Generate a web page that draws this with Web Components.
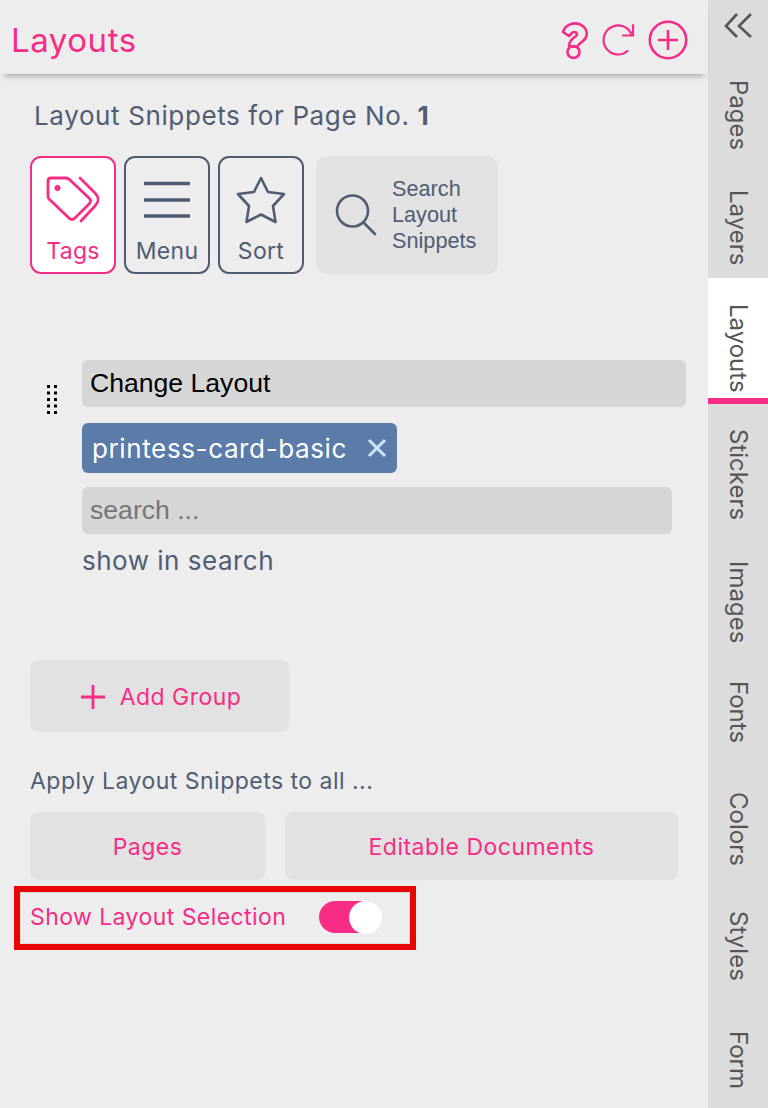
<!DOCTYPE html>
<html>
<head>
<meta charset="utf-8">
<title>Layouts</title>
<style>
    html, body { margin: 0; padding: 0; height: 100%; background: #ededed; overflow: hidden; }
</style>
</head>
<body>
<app-shell>
    <layout-panel></layout-panel>
    <tab-rail slot="rail"></tab-rail>
</app-shell>

<script>
const PINK = '#f72c84';
const SLATE = '#4f5c73';
const FONT = 'Inter, "Noto Sans", sans-serif';
const ARIAL = '"Liberation Sans", Arial, sans-serif';

class AppShell extends HTMLElement {
    constructor() {
        super();
        this.attachShadow({ mode: 'open' });
    }

    connectedCallback() {
        this.shadowRoot.innerHTML = `
            <style>
                :host {
                    display: grid;
                    grid-template-columns: 708px 60px;
                    width: 768px;
                    height: 1108px;
                    background: #ededed;
                    font-family: ${FONT};
                }
            </style>
            <slot></slot>
            <slot name="rail"></slot>
        `;
    }
}

class TabRail extends HTMLElement {
    constructor() {
        super();
        this.attachShadow({ mode: 'open' });
    }

    connectedCallback() {
        // [label, height, padding above the text]
        const tabs = [
            ['Pages', 112, 22],
            ['Layers', 108, 20],
            ['Layouts', 126, 26],
            ['Stickers', 136, 25],
            ['Images', 124, 21],
            ['Fonts', 106, 17],
            ['Colors', 120, 22],
            ['Styles', 119, 21],
            ['Form', 99, 22]
        ];
        const items = tabs.map(([label, height, top]) => `
            <div class="tab ${label === 'Layouts' ? 'active' : ''}" style="height:${height}px;padding-top:${top}px">
                <span>${label}</span>
            </div>`).join('');

        this.shadowRoot.innerHTML = `
            <style>
                * { box-sizing: border-box; }
                :host {
                    display: flex;
                    flex-direction: column;
                    background: #dcdcdc;
                    height: 1108px;
                    overflow: hidden;
                    color: #555;
                    font: 24px ${FONT};
                }
                .collapse { height: 58px; flex: none; }
                .collapse svg { display: block; }
                .tab {
                    flex: none;
                    display: flex;
                    justify-content: center;
                    align-items: flex-start;
                }
                .tab span {
                    writing-mode: vertical-rl;
                    line-height: 60px;
                    white-space: nowrap;
                }
                .active {
                    background: #fff;
                    border-bottom: 6px solid ${PINK};
                }
            </style>
            <div class="collapse">
                <svg width="60" height="58" viewBox="708 0 60 58" fill="none" stroke="#555" stroke-width="2.6">
                    <path d="M737 14 L726 26 L737 37"/>
                    <path d="M751 14 L739 26 L751 37"/>
                </svg>
            </div>
            ${items}
        `;
    }
}

class PanelHeader extends HTMLElement {
    constructor() {
        super();
        this.attachShadow({ mode: 'open' });
    }

    connectedCallback() {
        this.shadowRoot.innerHTML = `
            <style>
                * { box-sizing: border-box; }
                :host {
                    display: flex;
                    align-items: center;
                    height: 74px;
                    padding: 6px 18px 0 11px;
                    background: #ededed;
                    box-shadow: 0 6px 6px -4px rgba(0, 0, 0, .3);
                    position: relative;
                }
                h1 {
                    flex: 1;
                    margin: 0;
                    font: 400 33px ${FONT};
                    letter-spacing: .55px;
                    color: ${PINK};
                }
                .icons { display: flex; }
                svg { display: block; }
            </style>
            <h1>Layouts</h1>
            <div class="icons">
                <svg width="44" height="40" viewBox="552 20 44 40" fill="none" stroke="${PINK}" stroke-width="2.6" stroke-linejoin="round">
                    <path d="M563 32 C565 25 573 22 579 24 C587 27 589 35 584 40 C581 43 578 44 577 47 L569 46 C569 41 573 38 576 36 C578 34 577 32 574 32 C572 32 571 34 569 36 Z"/>
                    <circle cx="573.500" cy="52" r="6"/>
                </svg>
                <svg width="50" height="40" viewBox="596 20 50 40" fill="none" stroke="${PINK}" stroke-width="2.200" stroke-linecap="round">
                    <path d="M627.500 51 A14.500 14.500 0 1 1 631.500 34.500"/>
                    <path d="M633 25 V35.500 H623"/>
                </svg>
                <svg width="44" height="40" viewBox="646 20 44 40" fill="none" stroke="${PINK}" stroke-width="2.600">
                    <circle cx="668" cy="40" r="18.200"/>
                    <path d="M658 40 H678 M668 30 V50"/>
                </svg>
            </div>
        `;
    }
}

class ToolButton extends HTMLElement {
    constructor() {
        super();
        this.attachShadow({ mode: 'open' });
    }

    connectedCallback() {
        const active = this.hasAttribute('active');
        const color = active ? PINK : SLATE;
        this.shadowRoot.innerHTML = `
            <style>
                * { box-sizing: border-box; }
                :host {
                    display: flex;
                    flex-direction: column;
                    align-items: center;
                    width: 86px;
                    height: 118px;
                    border: 2px solid ${color};
                    border-radius: 11px;
                    background: ${active ? '#fff' : 'transparent'};
                    color: ${color};
                    font: 400 23px/28px ${FONT};
                    letter-spacing: .3px;
                }
                .icon { height: 79px; }
                ::slotted(svg) { display: block; }
            </style>
            <div class="icon"><slot name="icon"></slot></div>
            <div><slot></slot></div>
        `;
    }
}

class SearchTool extends HTMLElement {
    constructor() {
        super();
        this.attachShadow({ mode: 'open' });
    }

    connectedCallback() {
        this.shadowRoot.innerHTML = `
            <style>
                * { box-sizing: border-box; }
                :host {
                    display: flex;
                    align-items: center;
                    width: 182px;
                    height: 118px;
                    margin-left: 12px;
                    padding-left: 18px;
                    gap: 14px;
                    border-radius: 11px;
                    background: #e2e2e2;
                    color: ${SLATE};
                    font: 400 21.700px/26px ${ARIAL};
                }
                svg { display: block; flex: none; }
            </style>
            <svg width="44" height="44" viewBox="334 193 44 44" fill="none" stroke="${SLATE}" stroke-width="2.600" stroke-linecap="round">
                <circle cx="352.500" cy="211" r="15.500"/>
                <path d="M364 223 L375 234"/>
            </svg>
            <div>Search<br>Layout<br>Snippets</div>
        `;
    }
}

class FieldBox extends HTMLElement {
    constructor() {
        super();
        this.attachShadow({ mode: 'open' });
    }

    connectedCallback() {
        const muted = this.hasAttribute('muted');
        this.shadowRoot.innerHTML = `
            <style>
                * { box-sizing: border-box; }
                :host {
                    display: flex;
                    align-items: center;
                    height: 47px;
                    padding-left: 8px;
                    border-radius: 6px;
                    background: #d6d6d6;
                    color: ${muted ? '#757575' : '#000'};
                    font: 26.600px ${ARIAL};
                }
            </style>
            <slot></slot>
        `;
    }
}

class TagChip extends HTMLElement {
    constructor() {
        super();
        this.attachShadow({ mode: 'open' });
    }

    connectedCallback() {
        this.shadowRoot.innerHTML = `
            <style>
                * { box-sizing: border-box; }
                :host {
                    display: inline-flex;
                    align-items: center;
                    width: 315px;
                    height: 50px;
                    padding-left: 10px;
                    border-radius: 6px;
                    background: #5b7ba9;
                    color: #fff;
                    font: 400 26px ${FONT};
                    letter-spacing: .62px;
                }
                span { flex: 1; }
                svg { display: block; margin-right: 10px; }
            </style>
            <span><slot></slot></span>
            <svg width="20" height="20" viewBox="0 0 20 20" stroke="#d3e2fb" stroke-width="3" fill="none">
                <path d="M2 2 L18 18 M18 2 L2 18"/>
            </svg>
        `;
    }
}

class FlatButton extends HTMLElement {
    constructor() {
        super();
        this.attachShadow({ mode: 'open' });
    }

    connectedCallback() {
        this.shadowRoot.innerHTML = `
            <style>
                * { box-sizing: border-box; }
                :host {
                    display: flex;
                    align-items: center;
                    justify-content: center;
                    padding-top: 1px;
                    border-radius: 8px;
                    background: #e2e2e2;
                    color: ${PINK};
                    font: 400 23px ${FONT};
                    letter-spacing: .48px;
                }
            </style>
            <slot></slot>
        `;
    }
}

class ToggleSwitch extends HTMLElement {
    constructor() {
        super();
        this.attachShadow({ mode: 'open' });
    }

    connectedCallback() {
        this.shadowRoot.innerHTML = `
            <style>
                :host {
                    display: flex;
                    justify-content: flex-end;
                    width: 62px;
                    height: 32px;
                    border-radius: 16px;
                    background: ${PINK};
                }
                div {
                    flex: none;
                    width: 33px;
                    height: 33px;
                    margin: -.5px;
                    border-radius: 50%;
                    background: #fff;
                }
            </style>
            <div></div>
        `;
    }
}

class LayoutPanel extends HTMLElement {
    constructor() {
        super();
        this.attachShadow({ mode: 'open' });
    }

    connectedCallback() {
        const dots = [0, 1, 2, 3, 4].map(i =>
            `<rect x="0" y="${i * 6.5}" width="3" height="3"/><rect x="7" y="${i * 6.5}" width="3" height="3"/>`
        ).join('');

        this.shadowRoot.innerHTML = `
            <style>
                * { box-sizing: border-box; }
                :host {
                    display: block;
                    color: ${SLATE};
                    font-family: ${FONT};
                }
                .heading {
                    margin: 24px 0 0 34px;
                    height: 36px;
                    font: 400 26px/36px ${FONT};
                    letter-spacing: .62px;
                }
                .heading b { font-weight: 700; }
                .tools {
                    display: flex;
                    gap: 8px;
                    margin: 22px 0 0 30px;
                }
                .tools search-tool { margin-left: 4px; }
                .group {
                    display: flex;
                    margin: 86px 0 0 47px;
                }
                .handle { width: 35px; flex: none; padding-top: 25px; }
                .handle svg { display: block; }
                .fields { width: 604px; }
                .chip-row { display: flex; margin-top: 16px; }
                .search { width: 590px; margin-top: 14px; }
                .show {
                    margin-top: 9px;
                    height: 36px;
                    font: 400 26px/36px ${FONT};
                    letter-spacing: .5px;
                }
                .add {
                    width: 259px;
                    height: 72px;
                    margin: 81px 0 0 30px;
                    padding-left: 3px;
                    gap: 15px;
                }
                .add svg { display: block; }
                .apply {
                    margin: 35px 0 0 30px;
                    height: 28px;
                    font: 400 23px/28px ${FONT};
                    letter-spacing: .48px;
                }
                .targets {
                    display: flex;
                    gap: 20px;
                    margin: 17px 0 0 30px;
                }
                .targets flat-button { height: 68px; }
                .highlight {
                    display: flex;
                    align-items: center;
                    width: 402px;
                    height: 64px;
                    margin: 6px 0 0 14px;
                    padding: 0 0 2px 10px;
                    border: 6px solid #e60606;
                    box-shadow: inset 0 0 0 1px #dcdcdc;
                    color: ${PINK};
                    font: 400 23px ${FONT};
                    letter-spacing: .43px;
                }
                .highlight span { width: 289px; flex: none; }
            </style>
            <panel-header></panel-header>
            <div class="heading">Layout Snippets for Page No. <b>1</b></div>
            <div class="tools">
                <tool-button active>
                    <svg slot="icon" width="60" height="78" viewBox="43 158 60 78" fill="none" stroke="${PINK}" stroke-width="2.800" stroke-linejoin="round" stroke-linecap="round">
                        <path d="M51 178 H66 C68 178 69 179 70 180 L89 198 C91 200 91 202 89 204 L75 218 C73 220 71 220 69 218 L49 199 C48 198 48 197 48 196 V181 C48 179 49 178 51 178 Z"/>
                        <circle cx="57.500" cy="188" r="1.600" fill="${PINK}"/>
                        <path d="M80 178 L95 193 C99 197 99 202 95 206 L81 221"/>
                    </svg>
                    Tags
                </tool-button>
                <tool-button>
                    <svg slot="icon" width="60" height="78" viewBox="137 158 60 78" fill="none" stroke="${SLATE}" stroke-width="3.400">
                        <path d="M144 183.500 H190 M144 200 H190 M144 216 H190"/>
                    </svg>
                    Menu
                </tool-button>
                <tool-button>
                    <svg slot="icon" width="60" height="78" viewBox="231 158 60 78" fill="none" stroke="${SLATE}" stroke-width="2.600" stroke-linejoin="round">
                        <path d="M261 178 L268 192 L284 194 L273 206 L275.500 222 L261 214.500 L246.500 222 L249 206 L238 194 L254 192 Z"/>
                    </svg>
                    Sort
                </tool-button>
                <search-tool></search-tool>
            </div>
            <div class="group">
                <div class="handle">
                    <svg width="10" height="30" viewBox="0 0 10 30" fill="#000">${dots}</svg>
                </div>
                <div class="fields">
                    <field-box>Change Layout</field-box>
                    <div class="chip-row"><tag-chip>printess-card-basic</tag-chip></div>
                    <field-box class="search" muted>search ...</field-box>
                    <div class="show">show in search</div>
                </div>
            </div>
            <flat-button class="add">
                <svg width="24" height="24" viewBox="0 0 24 24" stroke="${PINK}" stroke-width="2.800" fill="none">
                    <path d="M0 12 H24 M12 0 V24"/>
                </svg>
                <span>Add Group</span>
            </flat-button>
            <div class="apply">Apply Layout Snippets to all ...</div>
            <div class="targets">
                <flat-button style="width:235px">Pages</flat-button>
                <flat-button style="width:393px">Editable Documents</flat-button>
            </div>
            <div class="highlight">
                <span>Show Layout Selection</span>
                <toggle-switch></toggle-switch>
            </div>
        `;
    }
}

customElements.define('app-shell', AppShell);
customElements.define('tab-rail', TabRail);
customElements.define('panel-header', PanelHeader);
customElements.define('tool-button', ToolButton);
customElements.define('search-tool', SearchTool);
customElements.define('field-box', FieldBox);
customElements.define('tag-chip', TagChip);
customElements.define('flat-button', FlatButton);
customElements.define('toggle-switch', ToggleSwitch);
customElements.define('layout-panel', LayoutPanel);
</script>
</body>
</html>
